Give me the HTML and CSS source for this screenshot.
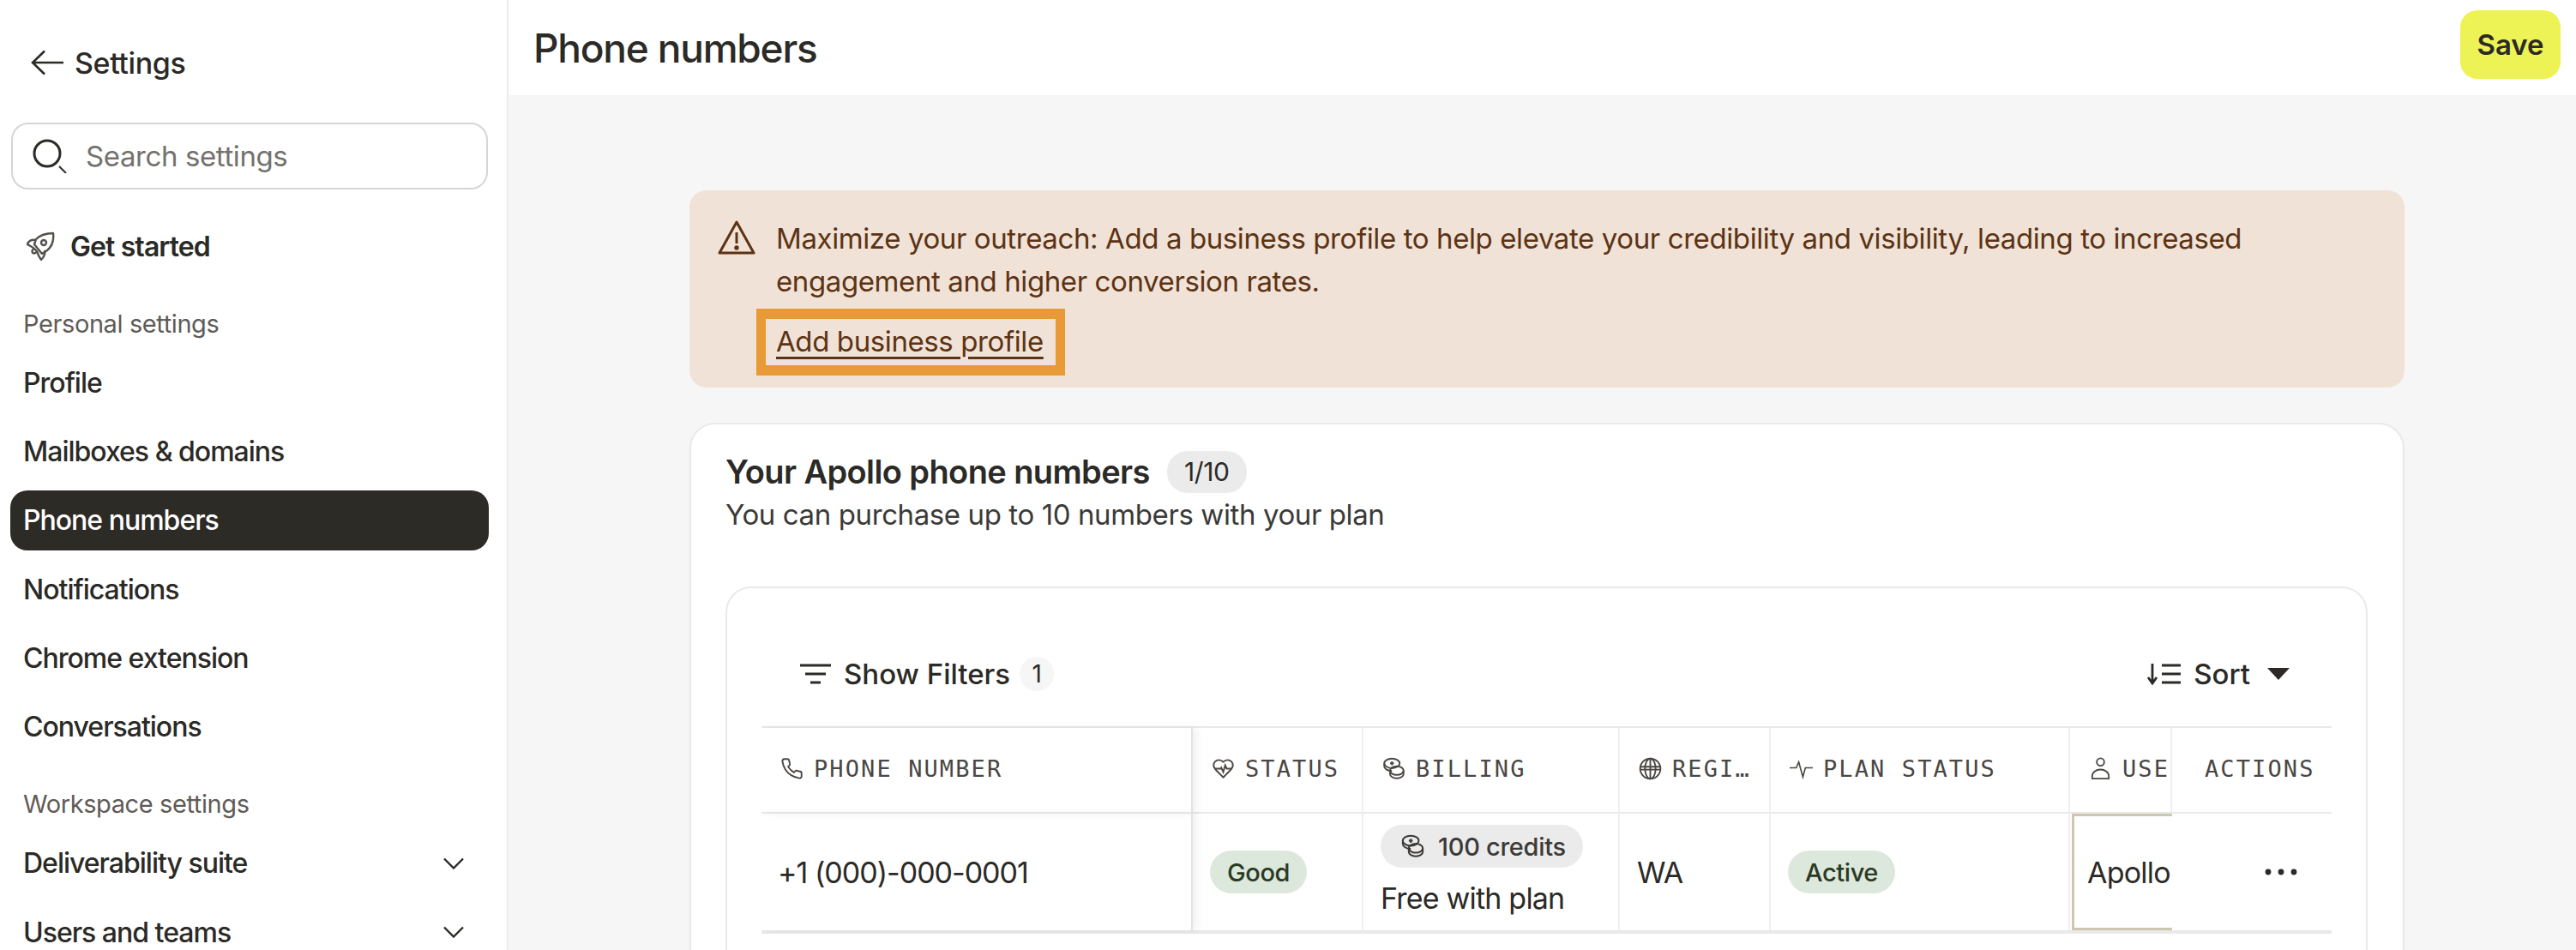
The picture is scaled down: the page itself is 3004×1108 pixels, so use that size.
FILE: index.html
```html
<!DOCTYPE html>
<html lang="en">
<head>
  <meta charset="UTF-8" />
  <title>Phone numbers</title>
  <link rel="stylesheet" href="styles.css">
</head>
<body>
  <aside class="sidebar">
    <div class="back">
      <svg class="icon-back" viewBox="0 0 38 30" fill="none" stroke="currentColor" stroke-width="2.6"><path d="M16 1.5 2 15l14 13.5M2 15h36"/></svg>
      <span>Settings</span>
    </div>
    <div class="search">
      <svg class="icon-search" viewBox="0 0 40 40" fill="none" stroke="currentColor" stroke-width="3"><circle cx="17" cy="17" r="15"/><path d="m31 32 8 8" stroke-width="2"/></svg>
      <span>Search settings</span>
    </div>
    <div class="get-started">
      <svg class="icon-rocket" viewBox="0 0 34 34" fill="none" stroke="currentColor" stroke-width="2.4" stroke-linejoin="round"><path d="M12 9c5-5 12-7 20-7 1 8-1 15-7 20l-6 4-9-11z"/><circle cx="21" cy="13" r="3"/><path d="M11 10C7 9 3 11 2 15c3 2 6 3 8 5l3 3c1 3 2 6 5 10 3-3 5-7 4-11"/><path d="M10 20c-2 1-3 3-2 5 2 1 4 0 5-2"/></svg>
      <span>Get started</span>
    </div>
    <div class="nav-label">Personal settings</div>
    <nav class="nav-group">
      <div class="nav-item">Profile</div>
      <div class="nav-item">Mailboxes &amp; domains</div>
      <div class="nav-item active">Phone numbers</div>
      <div class="nav-item">Notifications</div>
      <div class="nav-item">Chrome extension</div>
      <div class="nav-item">Conversations</div>
    </nav>
    <div class="nav-label workspace">Workspace settings</div>
    <nav class="nav-group">
      <div class="nav-item">Deliverability suite
        <svg class="icon-chevron" viewBox="0 0 24 14" fill="none" stroke="currentColor" stroke-width="2.4"><path d="m1 1.5 11 11 11-11"/></svg>
      </div>
      <div class="nav-item">Users and teams
        <svg class="icon-chevron" viewBox="0 0 24 14" fill="none" stroke="currentColor" stroke-width="2.4"><path d="m1 1.5 11 11 11-11"/></svg>
      </div>
    </nav>
  </aside>

  <main class="main">
    <header class="topbar">
      <h1>Phone numbers</h1>
      <button class="save">Save</button>
    </header>

    <div class="content">
      <section class="banner">
        <svg class="icon-warning" viewBox="0 0 44 40" fill="none" stroke="currentColor" stroke-width="3" stroke-linejoin="round"><path d="M22 2 42 38H2z"/><path d="M22 14v13"/><circle cx="22" cy="32" r="1.2" fill="currentColor"/></svg>
        <div class="banner-body">
          <p>Maximize your outreach: Add a business profile to help elevate your credibility and visibility, leading to increased engagement and higher conversion rates.</p>
          <div class="highlight"><a href="#">Add business profile</a></div>
        </div>
      </section>

      <section class="card">
        <div class="card-title">
          <h2>Your Apollo phone numbers</h2>
          <span class="count">1/10</span>
        </div>
        <p class="card-sub">You can purchase up to 10 numbers with your plan</p>

        <div class="table-card">
          <div class="toolbar">
            <div class="filters">
              <svg class="icon-filter" viewBox="0 0 36 24" fill="none" stroke="currentColor" stroke-width="3"><path d="M0 2h36M6 12h24M12 22h12"/></svg>
              <span>Show Filters</span>
              <span class="filter-count">1</span>
            </div>
            <div class="sort">
              <svg class="icon-sort" viewBox="0 0 40 26" fill="none" stroke="currentColor" stroke-width="3"><path d="M6 1v22M1 17l5 7 5-7" stroke-width="2.8"/><path d="M17 3h22M17 13h22M17 23h22"/></svg>
              <span>Sort</span>
              <svg class="icon-caret" viewBox="0 0 26 14" fill="currentColor"><path d="M0 0h26L13 14z"/></svg>
            </div>
          </div>

          <div class="table">
            <div class="th first">
              <svg class="th-icon" viewBox="0 0 24 24" fill="none" stroke="currentColor" stroke-width="1.7"><path d="M22 16.9v3a2 2 0 0 1-2.2 2 19.8 19.8 0 0 1-8.6-3.1 19.5 19.5 0 0 1-6-6A19.8 19.8 0 0 1 2.1 4.2 2 2 0 0 1 4.1 2h3a2 2 0 0 1 2 1.7c.1 1 .4 1.9.7 2.8a2 2 0 0 1-.4 2.1L8.1 9.9a16 16 0 0 0 6 6l1.3-1.3a2 2 0 0 1 2.1-.4c.9.3 1.8.6 2.8.7a2 2 0 0 1 1.7 2z"/></svg>
              PHONE NUMBER
            </div>
            <div class="th">
              <svg class="th-icon" viewBox="0 0 24 24" fill="none" stroke="currentColor" stroke-width="1.7"><path d="M19 14c1.5-1.5 3-3.2 3-5.500A5.500 5.500 0 0 0 16.500 3c-1.800 0-3 .5-4.500 2-1.500-1.500-2.700-2-4.500-2A5.500 5.500 0 0 0 2 8.500C2 10.800 3.500 12.500 5 14l7 7z"/><path d="M3.200 12h6.300l.5-1 2 4.500 2-7 1.500 3.500h5.300"/></svg>
              STATUS
            </div>
            <div class="th">
              <svg class="th-icon" viewBox="0 0 24 24" fill="none" stroke="currentColor" stroke-width="1.7"><ellipse cx="10" cy="6.500" rx="8" ry="5"/><path d="M10 4.500v4M8 6.500h4"/><path d="M2 6.500v3c0 2.800 3.600 5 8 5"/><ellipse cx="15" cy="14" rx="7" ry="4.500"/><path d="M8 14v3.500c0 2.500 3 4.500 7 4.500s7-2 7-4.500V14"/></svg>
              BILLING
            </div>
            <div class="th">
              <svg class="th-icon" viewBox="0 0 24 24" fill="none" stroke="currentColor" stroke-width="1.7"><circle cx="12" cy="12" r="10.500"/><ellipse cx="12" cy="12" rx="5.500" ry="10.500"/><path d="M12 1.500v21M1.500 10h21M1.500 13h21"/></svg>
              REGI…
            </div>
            <div class="th">
              <svg class="th-icon" viewBox="0 0 28 24" fill="none" stroke="currentColor" stroke-width="1.7"><path d="M0 11h8l3-7 5 18 3-11h9"/></svg>
              PLAN STATUS
            </div>
            <div class="th">
              <svg class="th-icon" viewBox="0 0 24 28" fill="none" stroke="currentColor" stroke-width="1.900"><circle cx="12" cy="6" r="4.500"/><path d="M2 26v-3c0-4.500 4.500-8 10-8s10 3.500 10 8v3z"/></svg>
              USE
            </div>
            <div class="th last">ACTIONS</div>

            <div class="td first">+1 (000)-000-0001</div>
            <div class="td"><span class="pill green">Good</span></div>
            <div class="td billing">
              <span class="pill grey">
                <svg class="pill-icon" viewBox="0 0 24 24" fill="none" stroke="currentColor" stroke-width="1.700"><ellipse cx="10" cy="6.500" rx="8" ry="5"/><path d="M10 4.500v4M8 6.500h4"/><path d="M2 6.500v3c0 2.800 3.600 5 8 5"/><ellipse cx="15" cy="14" rx="7" ry="4.500"/><path d="M8 14v3.500c0 2.500 3 4.500 7 4.500s7-2 7-4.500V14"/></svg>
                100 credits
              </span>
              <span>Free with plan</span>
            </div>
            <div class="td">WA</div>
            <div class="td"><span class="pill green">Active</span></div>
            <div class="td focus">Apollo</div>
            <div class="td last">
              <svg class="icon-dots" viewBox="0 0 38 8" fill="currentColor"><circle cx="4" cy="4" r="3.400"/><circle cx="19" cy="4" r="3.400"/><circle cx="34" cy="4" r="3.400"/></svg>
            </div>
          </div>
        </div>
      </section>
    </div>
  </main>
</body>
</html>
```

FILE: styles.css
```css
:root {
  --ink: #2b2a26;
  --line: #e9e9e9;
  --brown: #5c3314;
}

* {
  box-sizing: border-box;
}

body {
  margin: 0;
  height: 100vh;
  display: flex;
  overflow: hidden;
  background: white;
  color: var(--ink);
  font-family: Inter, "Liberation Sans", sans-serif;
  font-size: 33px;
  letter-spacing: -0.4px;
}

/* sidebar */
.sidebar {
  width: 593px;
  flex: none;
  padding: 48px 21px 0 12px;
  border-right: 2px solid #ececec;
  overflow: hidden;
}

.back {
  height: 50px;
  padding-left: 24px;
  display: flex;
  align-items: center;
  gap: 13px;
  font-size: 34px;
  font-weight: 500;
}

.icon-back {
  width: 38px;
  height: 30px;
}

.search {
  height: 78px;
  margin: 45px 1px 0;
  padding-left: 23px;
  display: flex;
  align-items: center;
  gap: 22px;
  border: 2px solid #d6d6d6;
  border-radius: 20px;
  color: #74716e;
}

.icon-search {
  width: 40px;
  height: 40px;
  color: var(--ink);
}

.get-started {
  height: 70px;
  margin-top: 31px;
  padding-left: 18px;
  display: flex;
  align-items: center;
  gap: 18px;
  font-size: 32px;
  font-weight: 600;
  letter-spacing: -0.9px;
}

.icon-rocket {
  width: 34px;
  height: 34px;
  color: #55524e;
}

.nav-label {
  height: 40px;
  margin-top: 35px;
  padding-left: 15px;
  display: flex;
  align-items: center;
  color: #5f5b58;
  font-size: 29px;
}

.nav-group {
  margin-top: 14px;
  display: flex;
  flex-direction: column;
  gap: 10.4px;
}

.nav-item {
  height: 70px;
  padding: 0 29px 0 15px;
  display: flex;
  align-items: center;
  justify-content: space-between;
  border-radius: 20px;
  font-size: 32px;
  font-weight: 500;
  letter-spacing: -1px;
}

.nav-item.active {
  background: #2d2b26;
  color: white;
}

.icon-chevron {
  width: 24px;
  height: 14px;
}

/* main */
.main {
  flex: 1;
  min-width: 0;
  display: flex;
  flex-direction: column;
}

.topbar {
  height: 111px;
  flex: none;
  padding: 12px 18px 0 29px;
  display: flex;
  align-items: flex-start;
  justify-content: space-between;
}

.topbar h1 {
  margin: 16px 0 0;
  font-size: 46px;
  line-height: 56px;
  font-weight: 500;
  letter-spacing: -1.2px;
}

.save {
  width: 117px;
  height: 80px;
  border: none;
  border-radius: 20px;
  background: #edf354;
  color: var(--ink);
  font: inherit;
  font-weight: 600;
}

.content {
  flex: 1;
  padding: 111px 0 0 211px;
  background: #f6f6f6;
}

.banner {
  width: 2000px;
  height: 230px;
  padding: 31px 0 0 33px;
  display: flex;
  gap: 24px;
  border-radius: 20px;
  background: #f0e2d6;
  color: var(--brown);
  line-height: 50px;
}

.icon-warning {
  width: 44px;
  height: 40px;
  flex: none;
  margin-top: 4px;
}

.banner-body {
  width: 1800px;
}

.banner-body p {
  margin: 0;
}

.highlight {
  width: 360px;
  height: 78px;
  margin: 7px 0 0 -23px;
  padding: 0 0 2px 12px;
  display: flex;
  align-items: center;
  border: 11px solid #e89a37;
  border-width: 12px 11px;
}

.highlight a {
  color: inherit;
  text-decoration-thickness: 3px;
  text-underline-offset: 6px;
}

.card {
  width: 2000px;
  height: 700px;
  margin-top: 41px;
  padding: 30px 41px 0 40px;
  border: 2px solid var(--line);
  border-radius: 30px;
  background: white;
}

.card-title {
  height: 50px;
  display: flex;
  align-items: center;
  gap: 20px;
}

.card-title h2 {
  margin: 0;
  font-size: 38px;
  font-weight: 600;
  letter-spacing: -0.6px;
}

.count {
  width: 93px;
  height: 49px;
  display: flex;
  align-items: center;
  justify-content: center;
  border-radius: 24px;
  background: #ebebeb;
  font-size: 30px;
}

.card-sub {
  margin: 5px 0 0;
  line-height: 40px;
  color: #3b3a37;
}

.table-card {
  height: 600px;
  margin-top: 64px;
  padding: 0 40px;
  border: 2px solid var(--line);
  border-radius: 30px;
}

.toolbar {
  height: 161px;
  padding: 60px 49px 21px 45px;
  display: flex;
  align-items: center;
  justify-content: space-between;
  font-weight: 500;
  letter-spacing: 0;
}

.filters,
.sort {
  display: flex;
  align-items: center;
}

.icon-filter {
  width: 36px;
  height: 24px;
  margin-right: 15px;
}

.filter-count {
  width: 40px;
  height: 40px;
  margin-left: 11px;
  display: flex;
  align-items: center;
  justify-content: center;
  border-radius: 50%;
  background: #f6f6f6;
  font-size: 28px;
  font-weight: 400;
}

.icon-sort {
  width: 40px;
  height: 26px;
  margin-right: 14px;
}

.icon-caret {
  width: 26px;
  height: 14px;
  margin-left: 20px;
}

.table {
  display: grid;
  grid-template-columns: 503px 199px 299px 176px 349px 119px 186px;
  grid-template-rows: 100px 136px;
  border-top: 2px solid var(--line);
  border-bottom: 4px solid var(--line);
}

.th,
.td {
  display: flex;
  align-items: center;
  overflow: hidden;
  white-space: nowrap;
  border-right: 2px solid #efefef;
}

.th {
  padding: 0 0 3px 22px;
  gap: 12px;
  border-bottom: 2px solid var(--line);
  color: #4a4744;
  font-family: "DejaVu Sans Mono", "Liberation Mono", monospace;
  font-size: 27px;
  letter-spacing: 2.1px;
}

.th-icon {
  width: 27px;
  height: 27px;
  flex: none;
}

.th.first,
.td.first {
  position: relative;
  z-index: 1;
  border-right-color: #e3e3e3;
  box-shadow: 5px 0 9px rgba(0, 0, 0, 0.06);
}

.th.last,
.td.last {
  border-right: none;
}

.th.last {
  padding-left: 38px;
}

.td {
  padding-left: 20px;
  font-size: 34px;
  letter-spacing: -0.8px;
}

.td.first {
  padding-left: 19px;
  letter-spacing: -1px;
}

.td.billing {
  flex-direction: column;
  align-items: flex-start;
  padding-top: 13px;
  gap: 15px;
}

.td.focus {
  margin-left: 2px;
  padding-left: 15px;
  border: 3px solid #cdc6b0;
  border-right: none;
}

.td.last {
  padding-left: 108px;
}

.pill {
  height: 50px;
  padding: 0 20px;
  display: inline-flex;
  align-items: center;
  border-radius: 25px;
  font-size: 29px;
  letter-spacing: -0.4px;
}

.pill.green {
  background: #dde8dc;
  color: #2a3a25;
  font-weight: 500;
}

.pill.grey {
  gap: 12px;
  background: #ebebeb;
  color: #3b3a37;
  font-weight: 500;
  letter-spacing: -0.3px;
}

.pill-icon {
  width: 35px;
  height: 28px;
}

.icon-dots {
  width: 38px;
  height: 8px;
}
```
